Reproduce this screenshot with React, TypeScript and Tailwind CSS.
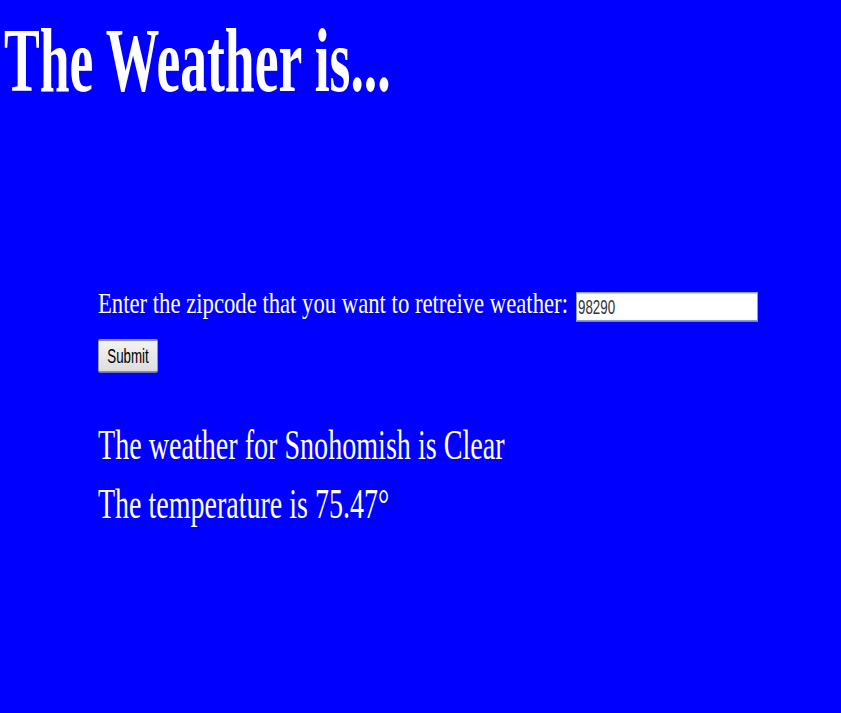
export default function App() {
  return (
    <div className="min-h-screen w-full overflow-hidden bg-[#0000ff] text-white font-['Liberation_Serif',serif]">
      {/* heading */}
      <div className="pt-[16px] pl-[4px] h-[107px]">
        <h1 className="inline-block origin-top-left scale-y-[1.7] whitespace-nowrap text-[53.6px] font-bold leading-none">
          The Weather is...
        </h1>
      </div>

      <div className="flex flex-col pl-[98px]">
        <form className="flex flex-col" onSubmit={(e) => e.preventDefault()}>
          <div className="mt-[182px] flex h-[33px] items-start">
            <label className="w-[478px] shrink-0">
              <span className="inline-block origin-top-left scale-y-[1.32] whitespace-nowrap text-[22.7px] leading-none">
                Enter the zipcode that you want to retreive weather:
              </span>
            </label>
            <input
              type="text"
              defaultValue="98290"
              className="mt-[3px] h-[20.4px] w-[182px] origin-top-left scale-y-[1.47] border border-[#8aa0c8] bg-white px-[1px] font-['Liberation_Sans',Arial,sans-serif] text-[13.33px] leading-none text-[#333] outline-none"
            />
          </div>

          <div className="mt-[16px] h-[34px]">
            <button
              type="submit"
              className="h-[23.1px] w-[60px] origin-top-left scale-y-[1.47] rounded-[2px] border border-[#9a9a9a] bg-gradient-to-b from-[#f4f4f4] to-[#dddddd] font-['Liberation_Sans',Arial,sans-serif] text-[13.33px] leading-none text-black"
            >
              Submit
            </button>
          </div>
        </form>

        <div className="mt-[52px] h-[43px]">
          <p className="inline-block origin-top-left scale-y-[1.53] whitespace-nowrap text-[28.1px] leading-none">
            The weather for Snohomish is Clear
          </p>
        </div>
        <div className="mt-[16px] h-[43px]">
          <p className="inline-block origin-top-left scale-y-[1.53] whitespace-nowrap text-[28px] leading-none">
            The temperature is 75.47°
          </p>
        </div>
      </div>
    </div>
  );
}
